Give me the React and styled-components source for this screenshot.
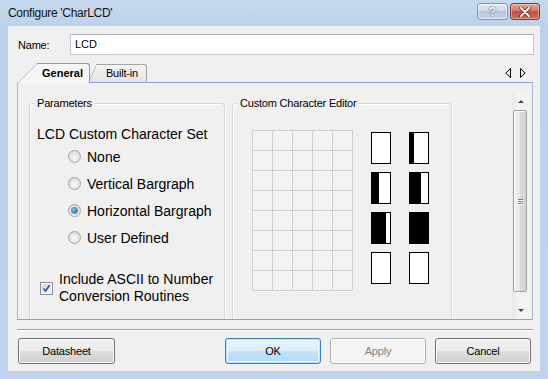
import styled, { createGlobalStyle, css } from "styled-components";

const GlobalStyle = createGlobalStyle`
  html, body { margin: 0; padding: 0; background: #bed3ec; }
  body {
    font-family: "Liberation Sans", Arial, sans-serif;
    font-size: 11px;
    color: #000;
  }
  * { box-sizing: border-box; }
`;

const Window = styled.div`
  width: 548px;
  height: 379px;
  display: flex;
  flex-direction: column;
  background: linear-gradient(#c6d9ef, #bcd2eb 26px, #bfd4ec);
`;

const TitleBar = styled.div`
  height: 26px;
  display: flex;
  justify-content: space-between;
  align-items: flex-start;
  padding: 0 8px;
`;

const Title = styled.div`
  font-size: 12px;
  line-height: 26px;
  letter-spacing: -0.3px;
  color: #111;
`;

const CaptionButtons = styled.div`
  display: flex;
  gap: 2px;
  margin-top: 3px;
`;

const CaptionButton = styled.div`
  width: ${(p) => (p.$close ? 30 : 31)}px;
  height: 17px;
  border-radius: 3px;
  display: flex;
  align-items: center;
  justify-content: center;
  font-weight: 700;
  font-size: 12px;
  color: #fff;
  ${(p) =>
    p.$close
      ? css`
          border: 1px solid #7a3a33;
          background: linear-gradient(#e8a594, #d07a68 45%, #c2503e 50%, #cf6f5c);
          box-shadow: inset 0 0 0 1px rgba(255, 255, 255, 0.35);
        `
      : css`
          border: 1px solid #7c93b1;
          background: linear-gradient(#e3ecf6, #cdd9e8 45%, #b4c6dd 50%, #c5d6ea);
          box-shadow: inset 0 0 0 1px rgba(255, 255, 255, 0.5);
          color: #f4f7fb;
          text-shadow: 0 0 2px #4d6584, 0 0 1px #4d6584;
        `}
`;

const Client = styled.div`
  flex: 1;
  margin: 0 8px 8px;
  background: #f0f0f0;
  padding: 8px 7px 7px 9px;
  display: flex;
  flex-direction: column;
`;

const NameRow = styled.div`
  height: 21px;
  display: flex;
  align-items: center;
  padding-left: 1px;
  margin-right: -1px;
`;

const Label = styled.span`
  width: 52px;
  letter-spacing: -0.2px;
`;

const TextBox = styled.div`
  flex: 1;
  height: 21px;
  border: 1px solid #c5c9cf;
  border-top-color: #abadb3;
  background: #fff;
  padding-left: 4px;
  line-height: 19px;
`;

const TabStrip = styled.div`
  position: relative;
  z-index: 1;
  margin-top: 8px;
  height: 19px;
  display: flex;
  align-items: flex-end;
`;

const Tab = styled.div`
  position: relative;
  height: ${(p) => (p.$active ? 20 : 18)}px;
  margin-bottom: ${(p) => (p.$active ? -1 : 0)}px;
  margin-left: ${(p) => (p.$active ? 0 : -2)}px;
  z-index: ${(p) => (p.$active ? 2 : 1)};
  padding: ${(p) => (p.$active ? "0 7px 0 25px" : "0 9px 0 18px")};
  display: flex;
  align-items: center;
  font-weight: ${(p) => (p.$active ? 700 : 400)};
  letter-spacing: ${(p) => (p.$active ? "0" : "-0.2px")};

  &::before {
    content: "";
    position: absolute;
    left: 0;
    top: 0;
    bottom: 0;
    width: 24px;
    border-left: 1px solid ${(p) => (p.$active ? "#7c9dc9" : "#a3a3a3")};
    border-top: 1px solid ${(p) => (p.$active ? "#7c9dc9" : "#a3a3a3")};
    border-top-left-radius: 2px;
    background: ${(p) => (p.$active ? "#f6f6f6" : "linear-gradient(#f4f4f4, #e4e4e4)")};
    transform-origin: bottom left;
    transform: skewX(${(p) => (p.$active ? -45 : -25)}deg);
  }

  &::after {
    content: "";
    position: absolute;
    top: 0;
    bottom: 0;
    left: ${(p) => (p.$active ? 20 : 8)}px;
    right: 0;
    border-top: 1px solid ${(p) => (p.$active ? "#7c9dc9" : "#a3a3a3")};
    border-right: 1px solid ${(p) => (p.$active ? "#7c9dc9" : "#a3a3a3")};
    border-top-right-radius: 3px;
    background: ${(p) => (p.$active ? "#f6f6f6" : "linear-gradient(#f4f4f4, #e4e4e4)")};
  }
`;

const TabLabel = styled.span`
  position: relative;
  z-index: 1;
`;

const TabArrows = styled.div`
  margin-left: auto;
  margin-right: 7px;
  align-self: center;
  display: flex;
  gap: 9px;
`;

const Panel = styled.div`
  height: 238px;
  border: 1px solid #aab9cb;
  border-top-color: #86a6cf;
  border-bottom-color: #a0a0a0;
  background: #f0f0f0;
  display: flex;
  padding: 10px 3px 0 11px;
`;

const ScrollContent = styled.div`
  flex: 1;
  overflow: hidden;
  display: flex;
  gap: 7px;
  align-items: flex-start;
`;

const Group = styled.div`
  position: relative;
  margin-top: 10px;
  width: ${(p) => p.$width}px;
  height: 240px;
  flex-shrink: 0;
  border: 1px solid #d5d9de;
  border-radius: 3px;
  box-shadow: inset 1px 1px 0 #fff, 1px 1px 0 #fff;
`;

const Legend = styled.span`
  position: absolute;
  top: -7px;
  left: 5px;
  padding: 0 2px;
  line-height: 13px;
  background: #f0f0f0;
  letter-spacing: -0.2px;
`;

const Heading = styled.div`
  margin: 21px 0 0 7px;
  font-size: 14px;
  line-height: 18px;
`;

const OptionRow = styled.div`
  height: 27px;
  display: flex;
  align-items: center;
  gap: 6px;
  padding-left: 38px;
  font-size: 14px;
`;

const Radio = styled.span`
  position: relative;
  width: 13px;
  height: 13px;
  border-radius: 50%;
  border: 1px solid #a2a2a2;
  background: radial-gradient(circle at 50% 60%, #fbfbfb 0%, #e4e4e4 55%, #cfcfcf 100%);
  flex-shrink: 0;

  &::after {
    content: "";
    display: ${(p) => (p.$checked ? "block" : "none")};
    position: absolute;
    left: 3px;
    top: 3px;
    width: 5px;
    height: 5px;
    border-radius: 50%;
    background: radial-gradient(circle at 40% 35%, #8fd0f5, #2a78b8 60%, #0f4f86);
    box-shadow: 0 0 0 1px #5b8fbd;
  }
`;

const CheckRow = styled.div`
  margin-top: 20px;
  padding-left: 10px;
  display: flex;
  align-items: center;
  gap: 6px;
  font-size: 14px;
  line-height: 17px;
`;

const CheckBox = styled.span`
  width: 13px;
  height: 13px;
  flex-shrink: 0;
  border: 1px solid #8e8f8f;
  background: linear-gradient(135deg, #cfd8ee, #eef1fa);
  box-shadow: inset 0 0 0 1px #f4f6fb;
  display: flex;
  align-items: center;
  justify-content: center;
`;

const EditorBody = styled.div`
  display: flex;
  gap: 18px;
  padding: 26px 0 0 19px;
`;

const PixelGrid = styled.div`
  display: grid;
  grid-template-columns: repeat(5, 19px);
  grid-auto-rows: 19px;
  gap: 1px;
  border: 1px solid #cfcfcf;
  background: #cfcfcf;
`;

const Pixel = styled.div`
  background: #f3f3f3;
`;

const CharSet = styled.div`
  margin-top: 2px;
  display: grid;
  grid-template-columns: repeat(2, 20px);
  grid-auto-rows: 32px;
  column-gap: 18px;
  row-gap: 8px;
`;

const CharBox = styled.div`
  border: 1px solid #000;
  background: #fff;
  display: flex;
`;

const CharFill = styled.div`
  width: ${(p) => (p.$level * 18) / 5}px;
  background: #000;
`;

const ScrollBar = styled.div`
  width: 17px;
  display: flex;
  flex-direction: column;
  background: linear-gradient(to right, #e8e8e8, #f3f3f3 40%, #f3f3f3);
`;

const ScrollArrow = styled.div`
  height: 17px;
  display: flex;
  align-items: center;
  justify-content: center;

  &::after {
    content: "";
    border-left: 3px solid transparent;
    border-right: 3px solid transparent;
    ${(p) =>
      p.$down
        ? css`border-top: 3px solid #4a4a4a;`
        : css`border-bottom: 3px solid #4a4a4a;`}
  }
`;

const Track = styled.div`
  flex: 1;
`;

const Thumb = styled.div`
  margin: 0 2px 0 1px;
  height: 182px;
  border: 1px solid #a0a0a0;
  border-radius: 2px;
  background: linear-gradient(to right, #f3f3f3, #e9e9e9 45%, #d9d9d9 55%, #d4d4d4);
  box-shadow: inset 1px 1px 0 #fcfcfc;
  display: flex;
  flex-direction: column;
  align-items: center;
  justify-content: center;
  gap: 1px;
`;

const Grip = styled.span`
  width: 5px;
  height: 1px;
  background: #7e7e7e;
  box-shadow: 0 1px 0 #fafafa;
`;

const Separator = styled.div`
  margin-top: 9px;
  height: 2px;
  border-top: 1px solid #a0a0a0;
  border-bottom: 1px solid #fff;
`;

const ButtonRow = styled.div`
  margin-top: 7px;
  display: flex;
  gap: 9px;
  padding: 0 2px 0 1px;
`;

const Spacer = styled.div`
  flex: 1;
`;

const Button = styled.button`
  width: ${(p) => p.$width || 96}px;
  height: 26px;
  font-family: "Liberation Sans", Arial, sans-serif;
  font-size: 11px;
  letter-spacing: -0.2px;
  border-radius: 3px;
  padding: 0;
  color: #000;
  border: 1px solid #707070;
  background: linear-gradient(#f2f2f2, #ebebeb 48%, #dddddd 52%, #cfcfcf);
  box-shadow: inset 0 0 0 1px #fbfbfb;
  ${(p) =>
    p.$default &&
    css`
      border-color: #3c7fb1;
      background: linear-gradient(#e9f5fc, #dcedf9 48%, #c4e3f8 52%, #b3d9f2);
      box-shadow: inset 0 0 0 1px #bfe6fb, inset 0 0 0 2px #eaf6fd;
    `}
  ${(p) =>
    p.disabled &&
    css`
      border-color: #adb2b5;
      background: #f4f4f4;
      box-shadow: inset 0 0 0 1px #fcfcfc;
      color: #838383;
    `}
`;

const levels = [0, 1, 2, 3, 4, 5, 0, 0];
const options = ["None", "Vertical Bargraph", "Horizontal Bargraph", "User Defined"];

export default function App() {
  return (
    <>
      <GlobalStyle />
      <Window>
        <TitleBar>
          <Title>Configure 'CharLCD'</Title>
          <CaptionButtons>
            <CaptionButton>?</CaptionButton>
            <CaptionButton $close>
              <svg width="12" height="10" viewBox="0 0 12 10">
                <path d="M2 1 L10 9 M10 1 L2 9" stroke="#5a2018" strokeWidth="3.4" strokeLinecap="round" />
                <path d="M2 1 L10 9 M10 1 L2 9" stroke="#fff" strokeWidth="2" strokeLinecap="round" />
              </svg>
            </CaptionButton>
          </CaptionButtons>
        </TitleBar>

        <Client>
          <NameRow>
            <Label>Name:</Label>
            <TextBox>LCD</TextBox>
          </NameRow>

          <TabStrip>
            <Tab $active>
              <TabLabel>General</TabLabel>
            </Tab>
            <Tab>
              <TabLabel>Built-in</TabLabel>
            </Tab>
            <TabArrows>
              <svg width="6" height="10" viewBox="0 0 6 10">
                <path d="M5.5 0.5 L0.8 5 L5.5 9.5 Z" fill="none" stroke="#000" />
              </svg>
              <svg width="6" height="10" viewBox="0 0 6 10">
                <path d="M0.5 0.5 L5.2 5 L0.5 9.5 Z" fill="none" stroke="#000" />
              </svg>
            </TabArrows>
          </TabStrip>

          <Panel>
            <ScrollContent>
              <Group $width={196}>
                <Legend>Parameters</Legend>
                <Heading>LCD Custom Character Set</Heading>
                {options.map((o, i) => (
                  <OptionRow key={o}>
                    <Radio $checked={i === 2} />
                    <span>{o}</span>
                  </OptionRow>
                ))}
                <CheckRow>
                  <CheckBox>
                    <svg width="9" height="9" viewBox="0 0 9 9">
                      <path d="M1.5 4.5 L3.6 7 L7.5 1.2" fill="none" stroke="#3d4f8c" strokeWidth="1.6" />
                    </svg>
                  </CheckBox>
                  <span>
                    Include ASCII to Number
                    <br />
                    Conversion Routines
                  </span>
                </CheckRow>
              </Group>

              <Group $width={220}>
                <Legend>Custom Character Editor</Legend>
                <EditorBody>
                  <PixelGrid>
                    {Array.from({ length: 40 }).map((_, i) => (
                      <Pixel key={i} />
                    ))}
                  </PixelGrid>
                  <CharSet>
                    {levels.map((l, i) => (
                      <CharBox key={i}>
                        <CharFill $level={l} />
                      </CharBox>
                    ))}
                  </CharSet>
                </EditorBody>
              </Group>
            </ScrollContent>

            <ScrollBar>
              <ScrollArrow />
              <Track>
                <Thumb>
                  <Grip />
                  <Grip />
                  <Grip />
                </Thumb>
              </Track>
              <ScrollArrow $down />
            </ScrollBar>
          </Panel>

          <Separator />

          <ButtonRow>
            <Button $width={97}>Datasheet</Button>
            <Spacer />
            <Button $default>OK</Button>
            <Button disabled>Apply</Button>
            <Button>Cancel</Button>
          </ButtonRow>
        </Client>
      </Window>
    </>
  );
}
